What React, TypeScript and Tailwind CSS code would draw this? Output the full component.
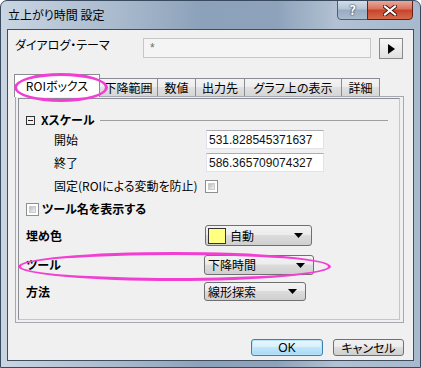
import React from "react";

// ---------------------------------------------------------------------------
// Small widgets
// ---------------------------------------------------------------------------

function DownArrow() {
  return (
    <svg width="9" height="5" viewBox="0 0 9 5" className="shrink-0">
      <polygon points="0,0 9,0 4.5,5" fill="#000" />
    </svg>
  );
}

function CheckBox() {
  return (
    <div className="w-[13px] h-[13px] shrink-0 border border-[#8e8f8f] bg-white p-[2px]">
      <div className="w-full h-full bg-[linear-gradient(135deg,#b9bcc0,#f2f2f2)] border border-[#c9cbcd]" />
    </div>
  );
}

function Combo({ w, h, text, swatch }: { w: string; h: string; text: string; swatch?: boolean }) {
  return (
    <div
      className={`${w} ${h} flex items-center rounded-[3px] border border-[#707070] bg-[linear-gradient(#f3f3f3_0%,#ececec_45%,#dcdcdc_50%,#cfcfcf_100%)] pl-[2px] pr-[8px]`}
    >
      {swatch && <div className="w-[18px] h-[16px] mr-[3px] bg-[#ffff80] border border-[#333]" />}
      <span className="flex-1 text-[12px] leading-[14px] pl-[1px]">{text}</span>
      <DownArrow />
    </div>
  );
}

function TextBox({ value }: { value: string }) {
  return (
    <div className="w-[118px] h-[19px] flex items-center bg-white border border-[#e2e3ea] border-t-[#abadb3] pl-[2px] text-[12px] [font-family:'Liberation_Sans',sans-serif] text-[#111]">
      {value}
    </div>
  );
}

const TABS = [
  { label: "下降範囲", w: "w-[59px]" },
  { label: "数値", w: "w-[39px]" },
  { label: "出力先", w: "w-[50px]" },
  { label: "グラフ上の表示", w: "w-[98px]" },
  { label: "詳細", w: "w-[39px]" },
];

// ---------------------------------------------------------------------------
// App
// ---------------------------------------------------------------------------

export default function App() {
  return (
    <div className="relative w-[421px] h-[368px] overflow-hidden rounded-t-[7px] border border-[#394a5e] bg-[linear-gradient(90deg,#c9d5e2_0%,#a9bacd_28%,#8ca1ba_48%,#8ea3bb_66%,#b2c1d3_80%,#a7b9ce_100%)] text-black [font-family:'Noto_Sans_CJK_JP','Noto_Sans',sans-serif] [font-feature-settings:'palt']">
      {/* Title bar */}
      <div className="h-[28px] flex items-start">
        <div className="flex-1 pl-[7px] pt-[6px] text-[12px] leading-[15px] text-black">立上がり時間 設定</div>
        <div className="flex mr-[7px] -mt-[1px]">
          <div className="w-[31px] h-[20px] flex items-center justify-center rounded-bl-[4px] border border-[#4d5f76] bg-[linear-gradient(#d3dde8_0%,#b4c3d4_45%,#98abc1_50%,#a9bbcf_100%)] text-white font-bold text-[13px] [text-shadow:0_0_2px_#2b3a4c,0_0_1px_#2b3a4c]">
            ?
          </div>
          <div className="w-[46px] h-[20px] -ml-[1px] flex items-center justify-center rounded-br-[4px] border border-[#6b1e14] bg-[linear-gradient(#e9a99a_0%,#d8715c_45%,#c7432b_50%,#d66a4a_100%)]">
            <svg width="14" height="11" viewBox="0 0 14 11">
              <path d="M2 1.5 L12 9.5 M12 1.5 L2 9.5" stroke="#3a1410" strokeWidth="4" strokeLinecap="square" />
              <path d="M2 1.5 L12 9.5 M12 1.5 L2 9.5" stroke="#fff" strokeWidth="2.2" strokeLinecap="square" />
            </svg>
          </div>
        </div>
      </div>

      {/* Client area */}
      <div className="mx-[6px] h-[332px] border border-[#3e4d60] bg-[#f0f0f0] flex flex-col">
        {/* Dialog theme */}
        <div className="flex items-start mt-[8px] pl-[7px]">
          <div className="w-[128px] text-[12px] leading-[14px] pt-[0px]">ダイアログ・テーマ</div>
          <div className="w-[228px] h-[20px] flex items-center border border-[#c6c6c6] bg-[#f4f4f4] pl-[6px] text-[12px] text-[#6d6d6d] [font-family:'Liberation_Sans',sans-serif]">
            *
          </div>
          <div className="ml-[8px] w-[24px] h-[21px] flex items-center justify-center border border-[#8a8a8a] bg-[linear-gradient(#f7f7f7,#e1e1e1)]">
            <svg width="7" height="10" viewBox="0 0 7 10">
              <polygon points="0,0 7,5 0,10" fill="#000" />
            </svg>
          </div>
        </div>

        {/* Tabs */}
        <div className="flex items-end mt-[15px] ml-[6px] h-[22px]">
          <div className="relative z-10 w-[86px] h-[23px] -mb-[1px] flex items-center justify-center border border-b-0 border-[#898c95] bg-white text-[12px] leading-[14px] pb-[1px]">
            ROIボックス
          </div>
          {TABS.map((t) => (
            <div
              key={t.label}
              className={`${t.w} h-[18px] -ml-[1px] flex items-center justify-center border border-b-0 border-[#898c95] bg-[linear-gradient(#f4f4f4_0%,#ededed_45%,#e0e0e0_50%,#d6d6d6_100%)] text-[12px] leading-[14px]`}
            >
              {t.label}
            </div>
          ))}
        </div>

        {/* Tab panel */}
        <div className="ml-[7px] w-[389px] h-[227px] border border-[#a5a8ae] bg-[#f0f0f0] pl-[2px] pt-[1px] pr-[3px] pb-[2px]">
          <div className="h-full border border-[#8b8e94] border-r-[#c4c6ca] border-b-[#c4c6ca] pl-[7px] pt-[12px] flex flex-col text-[12px] leading-[14px]">
            {/* X scale group */}
            <div className="h-[18px] flex items-center">
              <div className="w-[9px] h-[9px] border border-[#333] flex items-center justify-center">
                <div className="w-[5px] h-[1px] bg-[#222]" />
              </div>
              <span className="ml-[6px] font-bold">Xスケール</span>
              <div className="flex-1 h-[1px] bg-[#a0a0a0] ml-[5px] mr-[11px]" />
            </div>
            <div className="h-[19px] mt-[1px] flex items-center">
              <div className="w-[180px] pl-[28px]">開始</div>
              <TextBox value="531.828545371637" />
            </div>
            <div className="h-[19px] mt-[4px] flex items-center">
              <div className="w-[180px] pl-[28px]">終了</div>
              <TextBox value="586.365709074327" />
            </div>
            <div className="h-[18px] mt-[5px] flex items-center">
              <div className="w-[179px] pl-[28px]">固定(ROIによる変動を防止)</div>
              <CheckBox />
            </div>
            <div className="h-[18px] mt-[5px] flex items-center">
              <CheckBox />
              <span className="ml-[3px] font-bold">ツール名を表示する</span>
            </div>
            <div className="h-[21px] mt-[7px] flex items-center">
              <div className="w-[179px] font-bold">埋め色</div>
              <Combo w="w-[107px]" h="h-[21px]" text="自動" swatch />
            </div>
            <div className="h-[20px] mt-[9px] flex items-center">
              <div className="w-[178px] font-bold">ツール</div>
              <Combo w="w-[110px]" h="h-[20px]" text="下降時間" />
            </div>
            <div className="h-[19px] mt-[7px] flex items-center">
              <div className="w-[178px] font-bold">方法</div>
              <Combo w="w-[102px]" h="h-[19px]" text="線形探索" />
            </div>
          </div>
        </div>

        {/* Buttons */}
        <div className="flex justify-end mt-[16px] mr-[9px] gap-[10px]">
          <div className="w-[72px] h-[17px] flex items-center justify-center rounded-[3px] border border-[#3c7fb1] bg-[linear-gradient(#eaf6fd_0%,#d9f0fc_45%,#bee6fd_50%,#a7d9f5_100%)] shadow-[inset_0_0_0_1px_#b8e3f9] text-[12px] leading-[14px] [font-family:'Liberation_Sans',sans-serif]">
            OK
          </div>
          <div className="w-[71px] h-[17px] flex items-center justify-center rounded-[3px] border border-[#707070] bg-[linear-gradient(#f2f2f2_0%,#ebebeb_45%,#dddddd_50%,#cfcfcf_100%)] text-[12px] leading-[14px]">
            キャンセル
          </div>
        </div>
      </div>

      {/* Annotation ellipses */}
      <div className="absolute left-[13px] top-[72px] w-[94px] h-[29px] rounded-[50%] border-[3px] border-[#f23fd3] z-20" />
      <div className="absolute left-[17px] top-[251px] w-[313px] h-[29px] rounded-[50%] border-[3px] border-[#f23fd3] z-20" />
    </div>
  );
}
